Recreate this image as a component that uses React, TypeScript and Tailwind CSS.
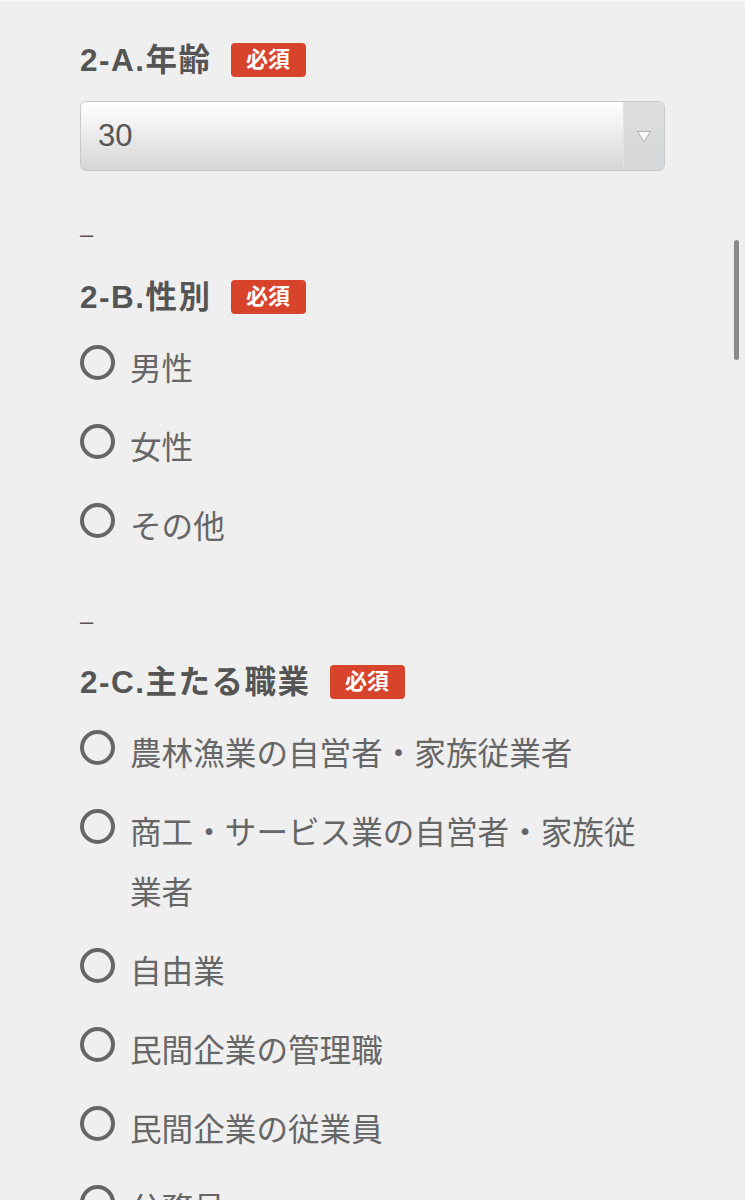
import React from 'react'

const FONT = '"Liberation Sans", "Noto Sans CJK JP", sans-serif'

function Heading({ label }: { label: string }) {
  return (
    <div className="flex items-center h-[40px]">
      <span className="text-[31.5px] font-bold tracking-[1.5px] text-[#555] leading-[40px]">{label}</span>
      <span className="ml-[19px] inline-flex items-center justify-center w-[75px] h-[34px] rounded-[4px] bg-[#d8432c] text-white text-[22px] font-bold leading-none">
        必須
      </span>
    </div>
  )
}

function Radio({ label }: { label: string }) {
  return (
    <div className="flex items-start">
      <span className="mt-[6px] shrink-0 w-[35px] h-[35px] rounded-full border-[4px] border-[#666]" />
      <span className="ml-[15px] text-[31.6px] leading-[60px] text-[#666]">{label}</span>
    </div>
  )
}

function Dash() {
  return <div className="h-[30px] leading-[30px] text-[24px] text-[#555]">–</div>
}

export default function App() {
  const jobs = [
    '農林漁業の自営者・家族従業者',
    '商工・サービス業の自営者・家族従業者',
    '自由業',
    '民間企業の管理職',
    '民間企業の従業員',
    '公務員',
    '学生',
  ]

  return (
    <div
      className="relative h-[1200px] overflow-hidden bg-[#efefef] border-t-2 border-[#f8f8f8]"
      style={{ fontFamily: FONT }}
    >
      <div className="ml-[80px] w-[585px] pt-[38px]">
        {/* 2-A */}
        <Heading label="2-A.年齢" />
        <div className="mt-[21px] flex h-[70px] rounded-[6px] border border-[#c9c9c9] bg-gradient-to-b from-[#ffffff] to-[#d6d6d6] overflow-hidden">
          <div className="flex-1 flex items-center pl-[17px] text-[31px] text-[#555]">30</div>
          <div className="w-[41px] flex items-center justify-center border-l border-[#e2e2e2] bg-gradient-to-b from-[#dedede] to-[#d4d6d7]">
            <svg width="16" height="13" viewBox="0 0 16 13">
              <path d="M1.5 1.5 L14.5 1.5 L8 11.5 Z" fill="#fafafa" stroke="#b0b0b0" strokeWidth="1" />
            </svg>
          </div>
        </div>

        <div className="mt-[48px]">
          <Dash />
        </div>

        {/* 2-B */}
        <div className="mt-[28px]">
          <Heading label="2-B.性別" />
        </div>
        <div className="mt-[22px] flex flex-col gap-[19px]">
          <Radio label="男性" />
          <Radio label="女性" />
          <Radio label="その他" />
        </div>

        <div className="mt-[49px]">
          <Dash />
        </div>

        {/* 2-C */}
        <div className="mt-[26px]">
          <Heading label="2-C.主たる職業" />
        </div>
        <div className="mt-[22px] flex flex-col gap-[19px]">
          {jobs.map((j) => (
            <Radio key={j} label={j} />
          ))}
        </div>
      </div>

      {/* scrollbar */}
      <div className="absolute left-[734px] top-[238px] w-[5px] h-[120px] rounded-full bg-[#8a8a8a]" />
    </div>
  )
}
